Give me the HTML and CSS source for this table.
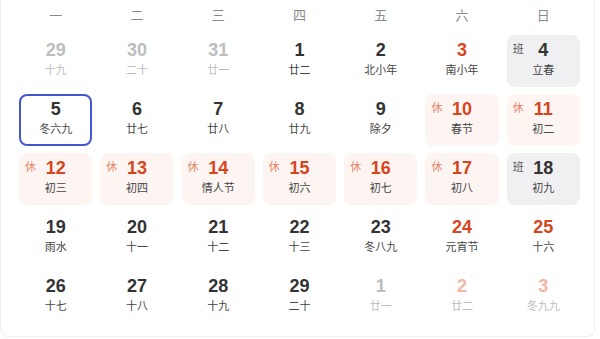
FILE: index.html
```html
<!DOCTYPE html>
<html lang="zh-CN">
<head>
<meta charset="utf-8">
<title>日历</title>
<link rel="stylesheet" href="styles.css">
</head>
<body>
<div class="card">
  <div class="grid">
    <div class="wd">一</div><div class="wd">二</div><div class="wd">三</div><div class="wd">四</div><div class="wd">五</div><div class="wd">六</div><div class="wd">日</div>

    <div class="cell other"><span class="num">29</span><span class="lun">十九</span></div>
    <div class="cell other"><span class="num">30</span><span class="lun">二十</span></div>
    <div class="cell other"><span class="num">31</span><span class="lun">廿一</span></div>
    <div class="cell"><span class="num">1</span><span class="lun">廿二</span></div>
    <div class="cell"><span class="num">2</span><span class="lun">北小年</span></div>
    <div class="cell red"><span class="num">3</span><span class="lun">南小年</span></div>
    <div class="cell work"><span class="tag">班</span><span class="num">4</span><span class="lun">立春</span></div>

    <div class="cell today"><span class="num">5</span><span class="lun">冬六九</span></div>
    <div class="cell"><span class="num">6</span><span class="lun">廿七</span></div>
    <div class="cell"><span class="num">7</span><span class="lun">廿八</span></div>
    <div class="cell"><span class="num">8</span><span class="lun">廿九</span></div>
    <div class="cell"><span class="num">9</span><span class="lun">除夕</span></div>
    <div class="cell rest"><span class="tag">休</span><span class="num">10</span><span class="lun">春节</span></div>
    <div class="cell rest"><span class="tag">休</span><span class="num">11</span><span class="lun">初二</span></div>

    <div class="cell rest"><span class="tag">休</span><span class="num">12</span><span class="lun">初三</span></div>
    <div class="cell rest"><span class="tag">休</span><span class="num">13</span><span class="lun">初四</span></div>
    <div class="cell rest"><span class="tag">休</span><span class="num">14</span><span class="lun">情人节</span></div>
    <div class="cell rest"><span class="tag">休</span><span class="num">15</span><span class="lun">初六</span></div>
    <div class="cell rest"><span class="tag">休</span><span class="num">16</span><span class="lun">初七</span></div>
    <div class="cell rest"><span class="tag">休</span><span class="num">17</span><span class="lun">初八</span></div>
    <div class="cell work"><span class="tag">班</span><span class="num">18</span><span class="lun">初九</span></div>

    <div class="cell"><span class="num">19</span><span class="lun">雨水</span></div>
    <div class="cell"><span class="num">20</span><span class="lun">十一</span></div>
    <div class="cell"><span class="num">21</span><span class="lun">十二</span></div>
    <div class="cell"><span class="num">22</span><span class="lun">十三</span></div>
    <div class="cell"><span class="num">23</span><span class="lun">冬八九</span></div>
    <div class="cell red"><span class="num">24</span><span class="lun">元宵节</span></div>
    <div class="cell red"><span class="num">25</span><span class="lun">十六</span></div>

    <div class="cell"><span class="num">26</span><span class="lun">十七</span></div>
    <div class="cell"><span class="num">27</span><span class="lun">十八</span></div>
    <div class="cell"><span class="num">28</span><span class="lun">十九</span></div>
    <div class="cell"><span class="num">29</span><span class="lun">二十</span></div>
    <div class="cell other"><span class="num">1</span><span class="lun">廿一</span></div>
    <div class="cell other red"><span class="num">2</span><span class="lun">廿二</span></div>
    <div class="cell other red"><span class="num">3</span><span class="lun">冬九九</span></div>
  </div>
</div>
</body>
</html>
```

FILE: styles.css
```css
html, body {
  margin: 0;
  padding: 0;
  background: #ffffff;
}

body {
  font-family: "Liberation Sans", Arial, "Noto Sans CJK SC", sans-serif;
  width: 600px;
  height: 339px;
  overflow: hidden;
}

.card {
  width: 595px;
  height: 337px;
  box-sizing: border-box;
  border: 1px solid #efefef;
  border-top: none;
  border-radius: 0 0 8px 8px;
  padding: 0 14px 0 18px;
}

.grid {
  display: grid;
  grid-template-columns: repeat(7, 1fr);
  grid-template-rows: 28px repeat(5, 52px);
  column-gap: 8px;
  row-gap: 7px;
}

.wd {
  display: flex;
  align-items: center;
  justify-content: center;
  font-family: "Noto Sans CJK SC", sans-serif;
  font-size: 13px;
  color: #8a8a8a;
}

.cell {
  position: relative;
  display: flex;
  flex-direction: column;
  align-items: center;
  padding-top: 5px;
  box-sizing: border-box;
  border-radius: 8px;
}

.num {
  font-family: "Liberation Sans", Arial, sans-serif;
  font-weight: bold;
  font-size: 18px;
  line-height: 20px;
  color: #333333;
}

.lun {
  margin-top: 2px;
  font-family: "Noto Sans CJK SC", sans-serif;
  font-size: 11px;
  line-height: 14px;
  color: #444444;
}

.tag {
  position: absolute;
  top: 7px;
  left: 6px;
  font-family: "Noto Sans CJK SC", sans-serif;
  font-size: 11px;
  line-height: 12px;
}

.other .num,
.other .lun {
  color: #bdbdbd;
}

.red .num {
  color: #d5461f;
}

.other.red .num {
  color: #f1b6a6;
}

.rest {
  background: #fdf5f2;
}

.rest .num {
  color: #d5461f;
}

.rest .tag {
  color: #e4866a;
}

.work {
  background: #f0f0f2;
}

.work .tag {
  color: #555555;
}

.today {
  border: 2px solid #4557cf;
  padding-top: 3px;
}
```
